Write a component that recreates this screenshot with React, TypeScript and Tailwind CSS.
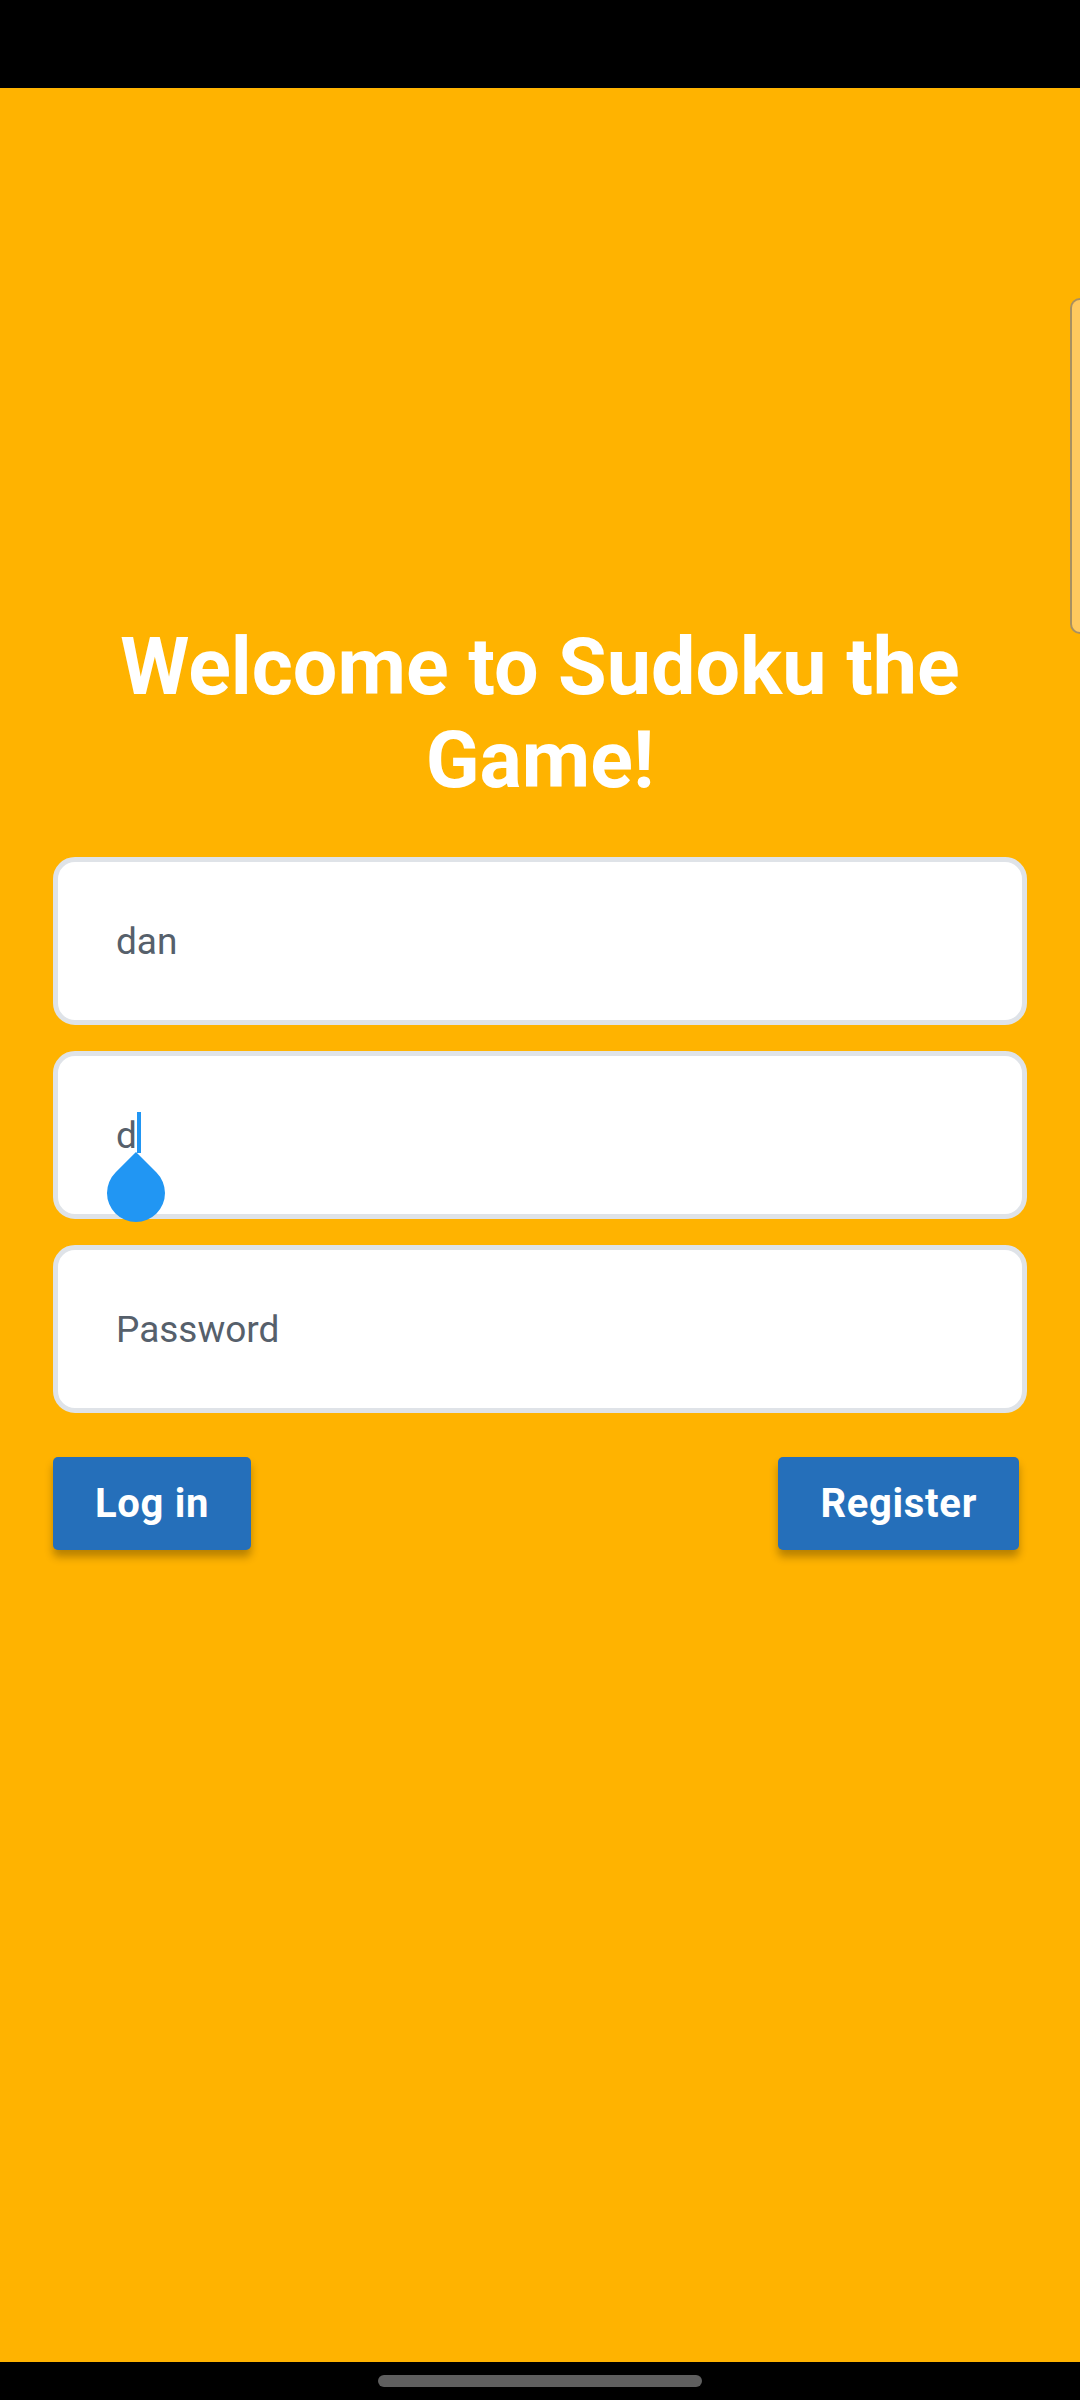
import React from "react";

export default function App() {
  return (
    <div className="flex h-[2400px] w-[1080px] flex-col bg-black font-['Roboto',sans-serif]">
      {/* status bar */}
      <div className="h-[88px] shrink-0 bg-black" />

      <main className="relative flex-1 bg-[#ffb300] px-[53px] pt-[533px]">
        <h1 className="text-center text-[79px] font-bold leading-[93px] text-white">
          Welcome to Sudoku the Game!
        </h1>

        <form className="mt-[50px] flex flex-col gap-[26px]">
          <input
            defaultValue="dan"
            className="h-[168px] w-full rounded-[22px] border-[5px] border-[#dfe3e8] bg-white px-[58px] text-[37px] text-[#56606b] outline-none"
          />

          <div className="relative">
            <input
              defaultValue="d"
              className="h-[168px] w-full rounded-[22px] border-[5px] border-[#dfe3e8] bg-white px-[58px] text-[37px] text-[#56606b] caret-transparent outline-none"
            />
            {/* text cursor + selection handle */}
            <div className="absolute left-[84px] top-[61px] h-[41px] w-[4px] bg-[#2196f3]" />
            <div className="absolute left-[54px] top-[113px] h-[58px] w-[58px] rotate-45 rounded-full rounded-tl-none bg-[#2196f3]" />
          </div>

          <input
            type="password"
            placeholder="Password"
            className="h-[168px] w-full rounded-[22px] border-[5px] border-[#dfe3e8] bg-white px-[58px] text-[37px] text-[#56606b] outline-none placeholder:text-[#56606b]"
          />

          <div className="mt-[18px] flex items-center justify-between pr-[8px]">
            <button
              type="button"
              className="h-[93px] rounded-[5px] bg-[#256fba] px-[42px] text-[40px] font-bold tracking-[0.7px] text-white shadow-[0_7px_9px_rgba(0,0,0,0.28)]"
            >
              Log in
            </button>
            <button
              type="button"
              className="h-[93px] rounded-[5px] bg-[#256fba] px-[42px] text-[40px] font-bold tracking-[0.7px] text-white shadow-[0_7px_9px_rgba(0,0,0,0.28)]"
            >
              Register
            </button>
          </div>
        </form>

        {/* edge panel handle */}
        <div className="absolute right-0 top-[210px] h-[336px] w-[10px] rounded-l-[10px] border-y-2 border-l-2 border-[#a99060] bg-[#ffc95e]" />
      </main>

      {/* navigation bar */}
      <div className="flex h-[38px] shrink-0 items-center justify-center bg-black">
        <div className="h-[12px] w-[324px] rounded-full bg-[#5f5f5f]" />
      </div>
    </div>
  );
}
